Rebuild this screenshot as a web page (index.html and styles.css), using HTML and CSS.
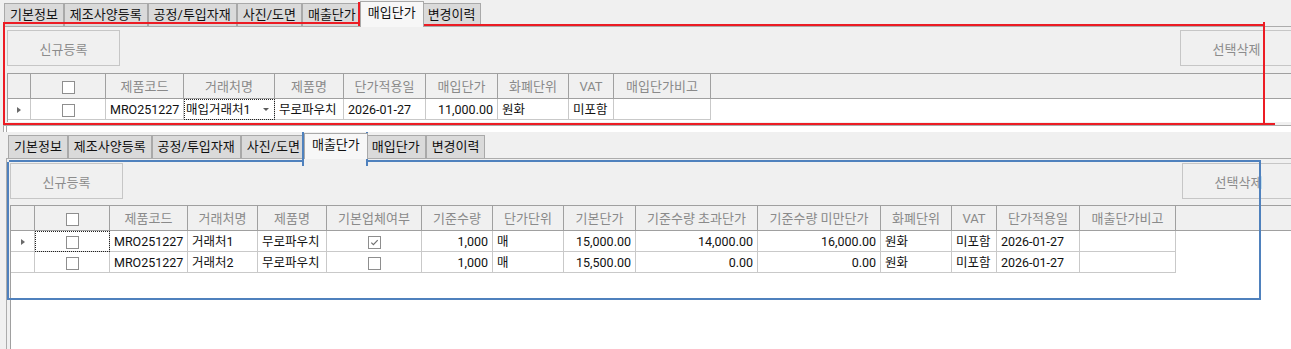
FILE: index.html
```html
<!DOCTYPE html>
<html lang="ko">
<head>
  <meta charset="UTF-8" />
  <meta name="viewport" content="width=device-width, initial-scale=1.0" />
  <title>단가 관리</title>

  <link rel="stylesheet" href="styles.css">
</head>

<body>
  <div class="screen">

    <!-- 상단: 매입단가 탭 -->
    <div class="tabctl tabctl-top">
      <div class="tabstrip">
        <div class="tab">기본정보</div>
        <div class="tab">제조사양등록</div>
        <div class="tab">공정/투입자재</div>
        <div class="tab">사진/도면</div>
        <div class="tab">매출단가</div>
        <div class="tab active">매입단가</div>
        <div class="tab">변경이력</div>
      </div>
      <div class="tabpage">
        <div class="toolbar">
          <button class="btn">신규등록</button>
          <button class="btn">선택삭제</button>
        </div>
        <div class="grid grid-buy">
          <table>
            <colgroup>
              <col class="w23"><col class="w75"><col class="w78"><col class="w91"><col class="w69">
              <col class="w82"><col class="w72"><col class="w71"><col class="w45"><col class="w97">
            </colgroup>
            <thead>
              <tr>
                <th></th>
                <th><span class="chk"></span></th>
                <th>제품코드</th>
                <th>거래처명</th>
                <th>제품명</th>
                <th>단가적용일</th>
                <th>매입단가</th>
                <th>화폐단위</th>
                <th>VAT</th>
                <th>매입단가비고</th>
              </tr>
            </thead>
            <tbody>
              <tr>
                <td class="c"><i class="row-arrow"></i></td>
                <td class="c"><span class="chk"></span></td>
                <td>MRO251227</td>
                <td class="focus combo-cell">
                  <div class="combo"><span>매입거래처1</span><i class="caret"></i></div>
                </td>
                <td>무로파우치</td>
                <td>2026-01-27</td>
                <td class="num">11,000.00</td>
                <td>원화</td>
                <td>미포함</td>
                <td></td>
              </tr>
            </tbody>
          </table>
        </div>
      </div>
    </div>

    <div class="splitter"></div>

    <!-- 하단: 매출단가 탭 -->
    <div class="tabctl tabctl-bottom">
      <div class="tabstrip">
        <div class="tab">기본정보</div>
        <div class="tab">제조사양등록</div>
        <div class="tab">공정/투입자재</div>
        <div class="tab">사진/도면</div>
        <div class="tab active">매출단가</div>
        <div class="tab">매입단가</div>
        <div class="tab">변경이력</div>
      </div>
      <div class="tabpage">
        <div class="toolbar">
          <button class="btn">신규등록</button>
          <button class="btn">선택삭제</button>
        </div>
        <div class="grid grid-sale">
          <table>
            <colgroup>
              <col class="w24"><col class="w75"><col class="w78"><col class="w70"><col class="w69">
              <col class="w95"><col class="w71"><col class="w71"><col class="w72"><col class="w122">
              <col class="w123"><col class="w71"><col class="w45"><col class="w83"><col class="w96">
            </colgroup>
            <thead>
              <tr>
                <th></th>
                <th><span class="chk"></span></th>
                <th>제품코드</th>
                <th>거래처명</th>
                <th>제품명</th>
                <th>기본업체여부</th>
                <th>기준수량</th>
                <th>단가단위</th>
                <th>기본단가</th>
                <th>기준수량 초과단가</th>
                <th>기준수량 미만단가</th>
                <th>화폐단위</th>
                <th>VAT</th>
                <th>단가적용일</th>
                <th>매출단가비고</th>
              </tr>
            </thead>
            <tbody>
              <tr>
                <td class="c"><i class="row-arrow"></i></td>
                <td class="c focus"><span class="chk"></span></td>
                <td>MRO251227</td>
                <td>거래처1</td>
                <td>무로파우치</td>
                <td class="c">
                  <span class="chk on">
                    <svg viewBox="0 0 11 11" width="11" height="11"><path d="M2.3 5.6 L4.4 7.7 L8.7 3.2" fill="none" stroke="#707070" stroke-width="1.2"/></svg>
                  </span>
                </td>
                <td class="num">1,000</td>
                <td>매</td>
                <td class="num">15,000.00</td>
                <td class="num">14,000.00</td>
                <td class="num">16,000.00</td>
                <td>원화</td>
                <td>미포함</td>
                <td>2026-01-27</td>
                <td></td>
              </tr>
              <tr>
                <td></td>
                <td class="c"><span class="chk"></span></td>
                <td>MRO251227</td>
                <td>거래처2</td>
                <td>무로파우치</td>
                <td class="c"><span class="chk"></span></td>
                <td class="num">1,000</td>
                <td>매</td>
                <td class="num">15,500.00</td>
                <td class="num">0.00</td>
                <td class="num">0.00</td>
                <td>원화</td>
                <td>미포함</td>
                <td>2026-01-27</td>
                <td></td>
              </tr>
            </tbody>
          </table>
        </div>
      </div>
    </div>

    <!-- 표시선 (빨강: 매입단가, 파랑: 매출단가) -->
    <div class="mark red red-tab"></div>
    <div class="mark red red-top-l"></div>
    <div class="mark red red-top-r"></div>
    <div class="mark red red-box"></div>
    <div class="mark red red-tail"></div>

    <div class="mark blue blue-tab"></div>
    <div class="mark blue blue-top-l"></div>
    <div class="mark blue blue-top-r"></div>
    <div class="mark blue blue-box"></div>
  </div>
</body>
</html>
```

FILE: styles.css
```css
body {
  margin: 0;
  background: #f0f0f0;
  font-family: Roboto, "Noto Sans CJK KR", sans-serif;
  font-size: 13px;
  color: #111;
  overflow: hidden;
}

.screen {
  position: relative;
  width: 1300px;
  height: 349px;
  overflow: hidden;
}

/* Tabs */
.tabstrip {
  display: flex;
  align-items: flex-end;
  height: 26px;
}

.tabctl-top .tabstrip {
  padding-left: 4px;
}

.tabctl-bottom .tabstrip {
  padding-left: 8px;
}

.tab {
  box-sizing: border-box;
  height: 23px;
  padding: 0 5px;
  border: 1px solid #a9a9a9;
  border-bottom: none;
  background: #dadada;
  line-height: 21px;
  white-space: nowrap;
}

.tab.active {
  position: relative;
  z-index: 1;
  height: 26px;
  margin: 0 -2px -1px;
  padding: 0 7px;
  background: #f7f7f7;
  line-height: 22px;
}

.tabpage {
  border: 1px solid #acacac;
  background: #f0f0f0;
}

.tabctl-top .tabpage {
  margin: 0 3px 0 3px;
  padding: 3px;
}

.tabctl-bottom .tabpage {
  margin: 0 1px 0 6px;
  padding: 4px 3px 0;
  height: 200px;
}

.splitter {
  height: 6px;
  background: linear-gradient(to right, #f0f0f0 3px, #a8a8a8 3px, #a8a8a8 4px, #fff 4px, #fff 6px, #a8a8a8 6px, #a8a8a8 7px, #fff 7px);
}

/* Buttons */
.toolbar {
  display: flex;
  justify-content: space-between;
  margin-bottom: 7px;
}

.tabctl-bottom .toolbar {
  margin-bottom: 6px;
}

.btn {
  width: 113px;
  height: 36px;
  padding: 0;
  border: 1px solid #c6c6c6;
  background: #f0f0f0;
  color: #8c8c8c;
  font-family: inherit;
  font-size: 13px;
}

/* Grid */
.grid {
  box-sizing: border-box;
  border-top: 1px solid #a0a0a0;
  border-left: 1px solid #a0a0a0;
  background: linear-gradient(#f0f0f0 24px, #a0a0a0 24px, #a0a0a0 25px, #fff 25px);
  overflow: hidden;
}

.grid-buy {
  height: 49px;
}

.grid-sale {
  height: 160px;
}

.grid table {
  border-collapse: separate;
  border-spacing: 0;
  table-layout: fixed;
}

.grid-buy table { width: 703px; }
.grid-sale table { width: 1165px; }

.w23 { width: 23px; }
.w24 { width: 24px; }
.w45 { width: 45px; }
.w69 { width: 69px; }
.w70 { width: 70px; }
.w71 { width: 71px; }
.w72 { width: 72px; }
.w75 { width: 75px; }
.w78 { width: 78px; }
.w82 { width: 82px; }
.w83 { width: 83px; }
.w91 { width: 91px; }
.w95 { width: 95px; }
.w96 { width: 96px; }
.w97 { width: 97px; }
.w122 { width: 122px; }
.w123 { width: 123px; }

.grid th,
.grid td {
  box-sizing: border-box;
  padding: 0 4px;
  white-space: nowrap;
  overflow: hidden;
}

.grid th {
  height: 25px;
  border-right: 1px solid #a0a0a0;
  border-bottom: 1px solid #a0a0a0;
  background: #f0f0f0;
  color: #8a8a8a;
  font-weight: normal;
  text-align: center;
  line-height: 23px;
}

.grid td {
  height: 21px;
  border-right: 1px solid #c9c9c9;
  border-bottom: 1px solid #c9c9c9;
  background: #fff;
  font-size: 12.5px;
  line-height: 19px;
}

.grid td.c { text-align: center; }
.grid td.num { text-align: right; }

.focus {
  outline: 1px dotted #222;
  outline-offset: -1px;
}

.grid td.combo-cell {
  padding: 0 5px 0 2px;
}

.combo {
  display: flex;
  align-items: center;
  justify-content: space-between;
}

.caret {
  width: 0;
  height: 0;
  border-left: 3px solid transparent;
  border-right: 3px solid transparent;
  border-top: 3px solid #5a5a5a;
}

.row-arrow {
  display: inline-block;
  width: 0;
  height: 0;
  border-left: 4px solid #6a6a6a;
  border-top: 3.5px solid transparent;
  border-bottom: 3.5px solid transparent;
  vertical-align: middle;
}

.chk {
  display: inline-block;
  box-sizing: border-box;
  width: 13px;
  height: 13px;
  border: 1px solid #8e8e8e;
  background: #fff;
  vertical-align: middle;
}

.chk svg {
  display: block;
}

/* Annotation lines over the screen */
.mark {
  position: absolute;
  box-sizing: border-box;
}

.red { border-color: #ec1c24; }
.blue { border-color: #4f81bd; }

.red-tab {
  left: 358px;
  top: 2px;
  width: 66px;
  height: 24px;
  border-style: solid;
  border-width: 2px 2px 0 2px;
}

.red-top-l {
  left: 4px;
  top: 22px;
  width: 356px;
  border-top: 2px solid #ec1c24;
}

.red-top-r {
  left: 422px;
  top: 24px;
  width: 843px;
  border-top: 2px solid #ec1c24;
}

.red-box {
  left: 3px;
  top: 22px;
  width: 1262px;
  height: 103px;
  border-style: solid;
  border-width: 0 2px 2px 2px;
}

.red-tail {
  left: 1265px;
  top: 123px;
  width: 10px;
  border-top: 2px solid #ec1c24;
}

.blue-tab {
  left: 302px;
  top: 132px;
  width: 66px;
  height: 34px;
  border-style: solid;
  border-width: 0 2px;
}

.blue-top-l {
  left: 9px;
  top: 160px;
  width: 295px;
  border-top: 2px solid #4f81bd;
}

.blue-top-r {
  left: 366px;
  top: 160px;
  width: 895px;
  border-top: 2px solid #4f81bd;
}

.blue-box {
  left: 7px;
  top: 162px;
  width: 1254px;
  height: 138px;
  border-style: solid;
  border-width: 0 2px 2px 2px;
}
```
